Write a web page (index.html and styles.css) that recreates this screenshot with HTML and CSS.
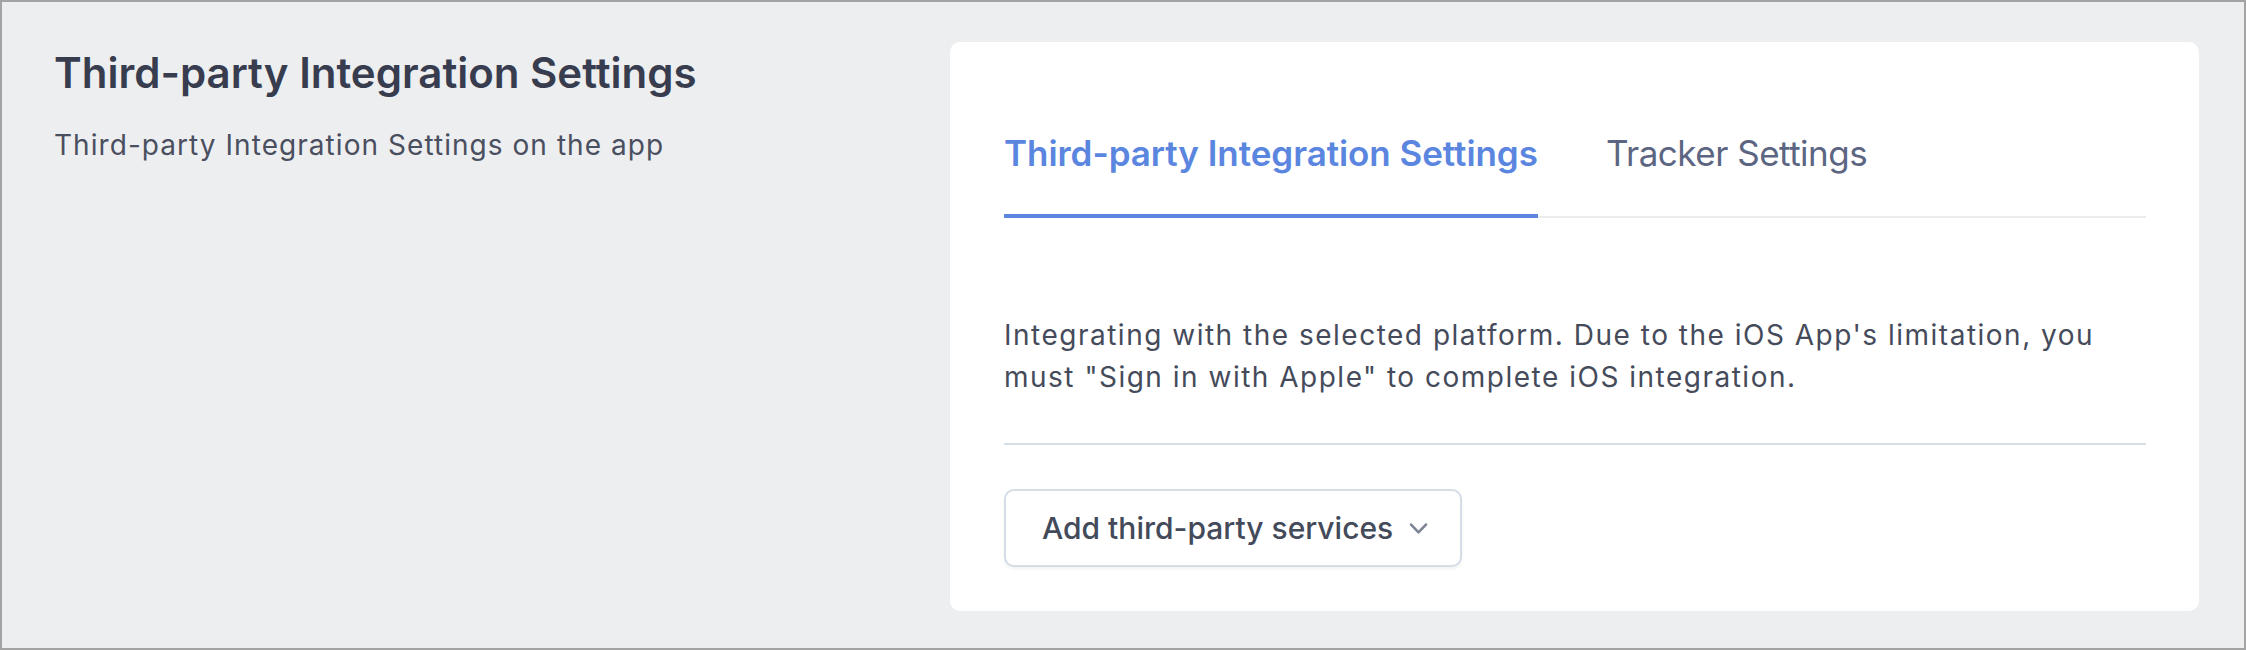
FILE: index.html
```html
<!DOCTYPE html>
<html lang="en">
<head>
<meta charset="utf-8">
<title>Third-party Integration Settings</title>
<link rel="stylesheet" href="styles.css">
</head>
<body>
<div class="frame">
  <section class="intro">
    <h1 class="intro-title">Third-party Integration Settings</h1>
    <p class="intro-desc">Third-party Integration Settings on the app</p>
  </section>
  <section class="card">
    <nav class="tabs">
      <a class="tab tab-active">Third-party Integration Settings</a>
      <a class="tab">Tracker Settings</a>
    </nav>
    <p class="card-text">Integrating with the selected platform. Due to the iOS App's limitation, you must "Sign in with Apple" to complete iOS integration.</p>
    <hr class="divider">
    <div class="actions">
      <button class="select-btn" type="button">
        <span>Add third-party services</span>
        <svg class="chevron" viewBox="0 0 20 20" aria-hidden="true"><path fill="currentColor" fill-rule="evenodd" d="M5.23 7.21a.75.75 0 011.06.02L10 11.168l3.71-3.938a.75.75 0 111.08 1.04l-4.25 4.5a.75.75 0 01-1.08 0l-4.25-4.5a.75.75 0 01.02-1.06z" clip-rule="evenodd"/></svg>
      </button>
    </div>
  </section>
</div>
</body>
</html>
```
FILE: styles.css
```css
html, body {
  margin: 0;
  padding: 0;
}

body {
  font-family: Inter, "Noto Sans", sans-serif;
  background: #edeef0;
}

.frame {
  box-sizing: border-box;
  height: 650px;
  border: 2px solid #a3a3a3;
  padding: 40px 45px 0 52px;
  display: flex;
  align-items: flex-start;
}

.intro {
  flex: none;
  width: 896px;
}

.intro-title {
  margin: 3px 0 0;
  font-size: 42px;
  line-height: 56px;
  font-weight: 600;
  color: #373c4e;
}

.intro-desc {
  margin: 23px 0 0;
  font-size: 28px;
  line-height: 42px;
  letter-spacing: 1.05px;
  color: #4a4f5f;
}

.card {
  flex: 1;
  background: #ffffff;
  border-radius: 10px;
  padding: 0 53px 44px 54px;
}

.tabs {
  display: flex;
  gap: 68px;
  padding-top: 87px;
  border-bottom: 2px solid #ececec;
}

.tab {
  font-size: 35px;
  line-height: 48px;
  padding-bottom: 37px;
  border-bottom: 4px solid transparent;
  margin-bottom: -2px;
  color: #5c6682;
  letter-spacing: -0.5px;
  cursor: pointer;
}

.tab-active {
  color: #5b86e0;
  font-weight: 600;
  letter-spacing: -0.05px;
  border-bottom-color: #5b86e0;
}

.card-text {
  margin: 96px 0 0;
  font-size: 28px;
  line-height: 42px;
  letter-spacing: 1.5px;
  color: #454b5a;
}

.divider {
  margin: 45px 0 0;
  border: 0;
  height: 2px;
  background: #d6dee6;
}

.actions {
  margin-top: 44px;
  display: flex;
}

.select-btn {
  display: inline-flex;
  align-items: center;
  gap: 8px;
  height: 78px;
  box-sizing: border-box;
  padding: 0 24px 0 36px;
  border: 2px solid #d5dde6;
  border-radius: 10px;
  background: #ffffff;
  box-shadow: 0 2px 3px rgba(30, 40, 60, 0.06);
  font-family: inherit;
  font-size: 30px;
  font-weight: 500;
  color: #434a5a;
  cursor: pointer;
}

.chevron {
  width: 35px;
  height: 35px;
  color: #7c8495;
}
```
